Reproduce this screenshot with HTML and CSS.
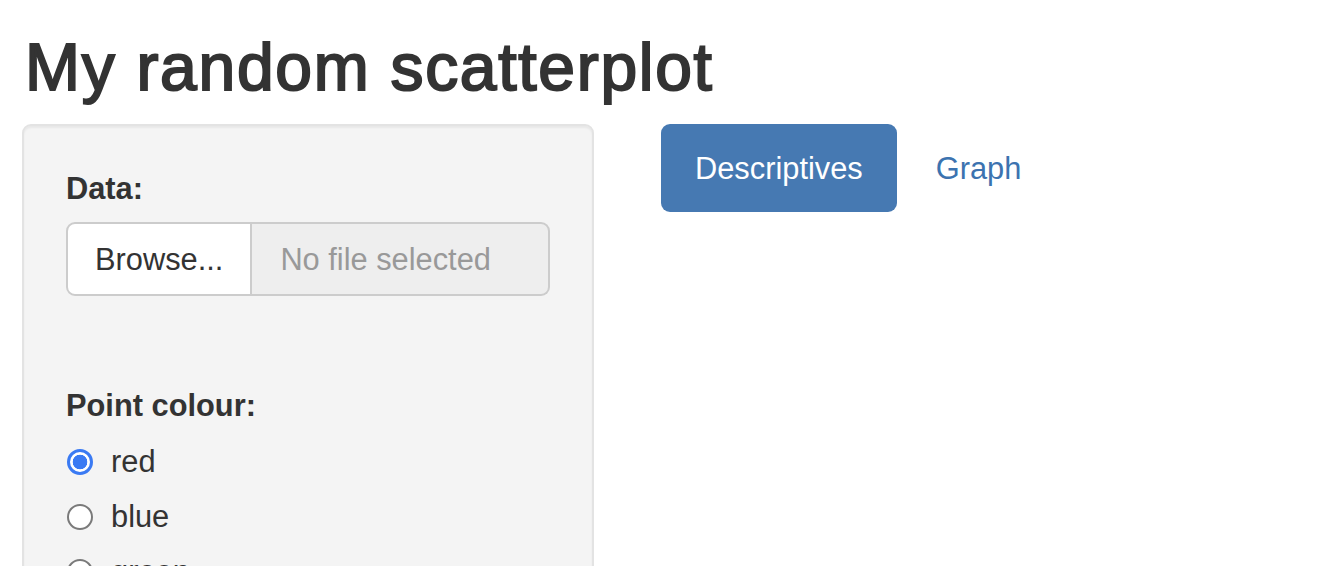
FILE: index.html
```html
<!DOCTYPE html>
<html>
<head>
<meta charset="utf-8">
<title>My random scatterplot</title>
<link rel="stylesheet" href="styles.css">
</head>
<body>
<div class="page">
  <h2 class="title">My random scatterplot</h2>
  <div class="row">
    <div class="sidebar">
      <div class="well">
        <div class="form-group file-group">
          <label class="control-label">Data:</label>
          <div class="input-group">
            <span class="btn-browse">Browse...</span>
            <span class="file-name">No file selected</span>
          </div>
        </div>
        <div class="form-group">
          <label class="control-label">Point colour:</label>
          <div class="options">
            <label class="radio"><input type="radio" name="col" checked><span>red</span></label>
            <label class="radio"><input type="radio" name="col"><span>blue</span></label>
            <label class="radio"><input type="radio" name="col"><span>green</span></label>
          </div>
        </div>
      </div>
    </div>
    <div class="main">
      <ul class="nav-pills">
        <li class="active"><a>Descriptives</a></li>
        <li><a>Graph</a></li>
      </ul>
    </div>
  </div>
</div>
</body>
</html>
```
FILE: styles.css
```css
html, body {
  margin: 0;
  padding: 0;
  background: #fff;
}
body {
  font-family: "Liberation Sans", Arial, Helvetica, sans-serif;
  font-size: 30.8px;
  line-height: 44px;
  color: #333;
  overflow: hidden;
}
.page {
  padding: 31px 22px 0 22px;
}
.title {
  margin: 0 0 20px 3px;
  font-size: 66px;
  line-height: 72.6px;
  font-weight: 500;
  letter-spacing: 1.7px;
  -webkit-text-stroke: 2px #333;
  color: #333;
}
.row {
  display: flex;
  align-items: flex-start;
}
.sidebar {
  width: 572px;
  flex: none;
}
.well {
  background: #f4f4f4;
  border: 2px solid #e3e3e3;
  border-radius: 9px;
  box-shadow: inset 0 2px 2px rgba(0,0,0,0.05);
  padding: 41px 42px 200px 42px;
}
.control-label {
  display: inline-block;
  font-weight: bold;
  margin-bottom: 11px;
  padding-top: 2px;
  margin-top: -2px;
}
.form-group {
  display: flex;
  flex-direction: column;
  align-items: flex-start;
}
.file-group {
  margin-bottom: 88px;
}
.input-group {
  display: flex;
  width: 100%;
  box-sizing: border-box;
}
.btn-browse {
  background: #fff;
  border: 2px solid #ccc;
  border-radius: 9px 0 0 9px;
  padding: 14px 27px 12px 27px;
  color: #333;
  white-space: nowrap;
}
.file-name {
  flex: 1;
  background: #eee;
  border: 2px solid #ccc;
  border-left: 0;
  border-radius: 0 9px 9px 0;
  padding: 14px 26px 12px 28px;
  color: #999;
  white-space: nowrap;
}
.options {
  display: flex;
  flex-direction: column;
  gap: 11px;
}
.radio {
  display: flex;
  align-items: center;
  height: 44px;
  gap: 18px;
}
.radio span {
  padding-top: 3px;
}
.radio input {
  appearance: none;
  -webkit-appearance: none;
  margin: 2px 0 0 1px;
  width: 26px;
  height: 26px;
  border-radius: 50%;
  box-sizing: border-box;
  border: 2px solid #7a7a7a;
  background: #fff;
}
.radio input:checked {
  border: 3px solid #3a7af3;
  background: radial-gradient(circle, #3a7af3 0 7px, #fff 7.6px);
}
.main {
  padding-left: 67px;
}
.nav-pills {
  list-style: none;
  margin: 0;
  padding: 0;
  display: flex;
}
.nav-pills li + li {
  margin-left: 5px;
}
.nav-pills a {
  display: block;
  padding: 23px 34px 21px 34px;
  border-radius: 9px;
  color: #3c73b0;
}
.nav-pills li.active a {
  background: #4679b2;
  color: #fff;
}
```
